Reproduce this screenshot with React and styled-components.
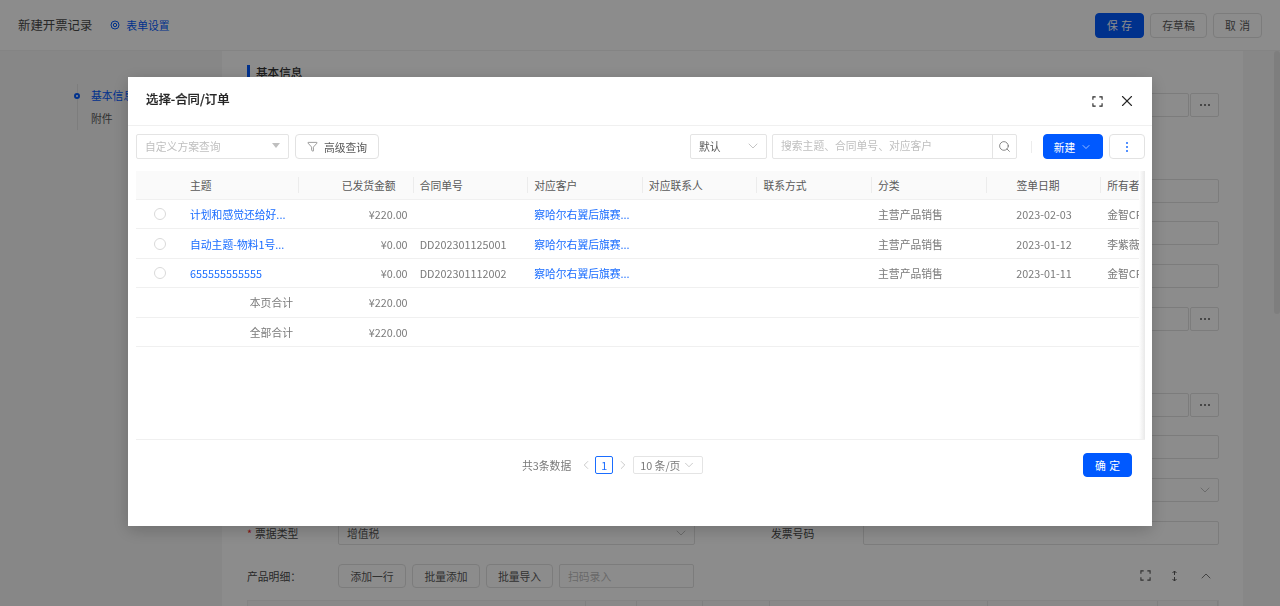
import React from "react";
import styled, { createGlobalStyle } from "styled-components";
import { ChevronDown, ChevronLeft, ChevronRight, ChevronUp, Filter, Search, X } from "lucide-react";

const GlobalStyle = createGlobalStyle`
  html, body {
    margin: 0;
    padding: 0;
    height: 100%;
    overflow: hidden;
    background: #fff;
    font-family: "Noto Sans CJK SC", "Noto Sans", sans-serif;
    font-size: 10.8px;
    color: #595959;
  }
  * { box-sizing: border-box; }
`;

const Page = styled.div`
  height: 606px;
  overflow: hidden;
  display: flex;
  flex-direction: column;
  background: #fff;
`;

const TopBar = styled.header`
  height: 51px;
  flex: none;
  display: flex;
  align-items: center;
  padding: 0 18px;
  border-bottom: 1px solid #f0f0f0;
`;

const PageTitle = styled.div`
  font-size: 12.4px;
  color: #4a4a4a;
`;

const SettingLink = styled.a`
  display: flex;
  align-items: center;
  gap: 6px;
  margin-left: 18px;
  color: #0059ff;
  font-size: 10.8px;
`;

const TopActions = styled.div`
  margin-left: auto;
  display: flex;
  gap: 6px;
`;

const Button = styled.button`
  height: ${(p) => p.$h || 25}px;
  width: ${(p) => p.$w}px;
  margin-left: ${(p) => p.$ml || 0}px;
  padding: 0;
  flex: none;
  display: inline-flex;
  flex-direction: ${(p) => (p.$stack ? "column" : "row")};
  align-items: center;
  justify-content: center;
  gap: ${(p) => p.$gap || 0}px;
  border-radius: 4px;
  border: 1px solid ${(p) => (p.$primary ? "#0059ff" : "#e2e2e2")};
  background: ${(p) => (p.$primary ? "#0059ff" : "#fff")};
  color: ${(p) => (p.$primary ? "#fff" : "#595959")};
  font-family: inherit;
  font-size: 10.8px;
  word-spacing: 1px;
`;

const Body = styled.div`
  flex: 1;
  min-height: 0;
  display: flex;
  background: #f6f6f6;
`;

const Sidebar = styled.aside`
  width: 222px;
  flex: none;
  padding: 33px 0 0 77px;
`;

const NavRail = styled.nav`
  border-left: 1px solid #e4e4e4;
  padding-left: 13px;
  height: 46px;
`;

const NavItem = styled.div`
  position: relative;
  height: 23px;
  line-height: 23px;
  color: ${(p) => (p.$active ? "#0059ff" : "#595959")};
  ${(p) =>
    p.$active &&
    `&::before {
      content: "";
      box-sizing: border-box;
      position: absolute;
      left: -17px;
      top: 9px;
      width: 6px;
      height: 6px;
      border-radius: 50%;
      border: 2px solid #0059ff;
      background: #fff;
    }`}
`;

const FormPanel = styled.main`
  width: 1021px;
  flex: none;
  background: #fff;
  padding: 14px 24px 0 25px;
`;

const SectionTitle = styled.h2`
  margin: 0 0 14px;
  height: 14px;
  line-height: 14px;
  padding-left: 6px;
  border-left: 3px solid #0059ff;
  font-size: 11.6px;
  font-weight: 500;
  color: #333;
`;

const FormGrid = styled.div`
  display: grid;
  grid-template-columns: 448px 448px;
  column-gap: 76px;
  row-gap: 18.8px;
`;

const Field = styled.div`
  display: grid;
  grid-template-columns: ${(p) => p.$labelW || 91}px 1fr;
  height: 24px;
  align-items: center;
`;

const FieldLabel = styled.label`
  color: #4a4a4a;
  white-space: nowrap;
`;

const Required = styled.span`
  color: #f5222d;
  margin-right: 3px;
`;

const Control = styled.div`
  grid-column: 2;
  height: 24px;
  display: flex;
  align-items: center;
  justify-content: space-between;
  padding: 0 5px 0 8px;
  border: 1px solid #e2e2e2;
  border-radius: 2px;
  background: #fff;
  color: #595959;
`;

const AddonRow = styled.div`
  grid-column: 2;
  display: flex;
  gap: 1px;
`;

const AddonInput = styled.div`
  flex: 1;
  height: 24px;
  border: 1px solid #e2e2e2;
  border-radius: 2px;
`;

const AddonButton = styled.div`
  width: 29px;
  height: 24px;
  display: flex;
  align-items: center;
  justify-content: center;
  gap: 2px;
  border: 1px solid #e2e2e2;
  border-radius: 2px;
`;

const Dot = styled.i`
  width: 2px;
  height: 2px;
  border-radius: 50%;
  background: ${(p) => p.$color || "#595959"};
`;

const DetailBar = styled.div`
  margin-top: 19px;
  height: 24px;
  display: flex;
  align-items: center;
`;

const DetailLabel = styled.div`
  width: 91px;
  color: #4a4a4a;
`;

const DetailButtons = styled.div`
  display: flex;
  gap: 6px;
`;

const ScanInput = styled.div`
  width: 135px;
  height: 24px;
  margin-left: 6px;
  padding: 0 8px;
  line-height: 22px;
  border: 1px solid #e2e2e2;
  border-radius: 2px;
  color: #bfbfbf;
`;

const DetailIcons = styled.div`
  margin-left: auto;
  margin-right: 5px;
  display: flex;
  align-items: center;
  gap: 19px;
  color: #595959;
`;

const DetailHead = styled.div`
  margin-top: 12px;
  height: 20px;
  display: grid;
  grid-template-columns: 338px 51px 66px 67px 218px 170px 1fr;
  background: #fafafa;
  border: 1px solid #f0f0f0;
  & > span { border-right: 1px solid #eaeaea; }
`;

const PageScroll = styled.div`
  flex: 1;
  background: #f6f6f6;
  display: flex;
  justify-content: flex-end;
`;

const ScrollThumb = styled.div`
  width: 6px;
  height: 263px;
  background: #e6e6e6;
  border-radius: 3px;
`;

const Mask = styled.div`
  position: fixed;
  inset: 0;
  background: rgba(0, 0, 0, 0.45);
  display: flex;
  justify-content: center;
  align-items: flex-start;
  padding-top: 77px;
`;

const Modal = styled.section`
  width: 1024px;
  height: 449px;
  display: flex;
  flex-direction: column;
  background: #fff;
  box-shadow: 0 4px 16px rgba(0, 0, 0, 0.2);
`;

const ModalHeader = styled.div`
  height: 49px;
  flex: none;
  display: flex;
  align-items: center;
  padding: 0 16px 0 18px;
  border-bottom: 1px solid #f0f0f0;
`;

const ModalTitle = styled.h3`
  margin: -5px 0 0;
  font-size: 12.4px;
  font-weight: 500;
  color: #262626;
  -webkit-text-stroke: 0.2px #262626;
`;

const ModalTools = styled.div`
  margin-left: auto;
  display: flex;
  align-items: center;
  gap: 15px;
  color: #262626;
`;

const Toolbar = styled.div`
  flex: none;
  display: flex;
  justify-content: space-between;
  padding: 8px 7px 0 8px;
  height: 45px;
`;

const ToolGroup = styled.div`
  display: flex;
  align-items: flex-start;
`;

const SelectBox = styled.div`
  width: ${(p) => p.$w}px;
  height: 25px;
  display: flex;
  align-items: center;
  justify-content: space-between;
  padding: 0 ${(p) => p.$pr || 8}px 2px 8px;
  border: 1px solid #e4e4e4;
  border-radius: 2px;
  color: ${(p) => (p.$muted ? "#bfbfbf" : "#595959")};
`;

const SearchBox = styled.div`
  width: 245px;
  height: 25px;
  margin-left: 5px;
  display: flex;
  border: 1px solid #e4e4e4;
  border-radius: 2px;
`;

const SearchText = styled.div`
  flex: 1;
  line-height: 21px;
  padding-left: 8px;
  color: #bfbfbf;
  border-right: 1px solid #e4e4e4;
`;

const SearchIcon = styled.div`
  width: 23px;
  display: flex;
  align-items: center;
  justify-content: center;
  color: #595959;
`;

const ToolDivider = styled.div`
  width: 1px;
  height: 12px;
  margin: 7px 11px 0 14px;
  background: #ececec;
`;

const TableWrap = styled.div`
  position: relative;
  height: 269px;
  margin: 0 7px 0 8px;
  flex: none;
  overflow: hidden;
  border-bottom: 1px solid #f0f0f0;
`;

const ScrollEdge = styled.div`
  position: absolute;
  top: 0;
  right: 0;
  bottom: 0;
  width: 6px;
  background: linear-gradient(to right, #fff, #e9e9e9);
`;

const Table = styled.table`
  width: 1079px;
  table-layout: fixed;
  border-collapse: separate;
  border-spacing: 0;

  th {
    position: relative;
    height: 29px;
    padding: 0 17px 0 7px;
    background: #fafafa;
    border-bottom: 1px solid #f0f0f0;
    font-weight: 400;
    color: #595959;
    text-align: left;
    white-space: nowrap;
  }

  th + th:not(.first-col)::before {
    content: "";
    position: absolute;
    left: 0;
    top: 6px;
    bottom: 6px;
    width: 1px;
    background: #ececec;
  }

  th.first-col {
    padding-left: 8px;
  }

  td {
    height: 29.4px;
    padding: 0 5px 0 7px;
    border-bottom: 1px solid #f0f0f0;
    color: #7a7a7a;
    white-space: nowrap;
    overflow: hidden;
  }

  td.first-col {
    padding-left: 8px;
  }

  .right { text-align: right; }
  .center { text-align: center; }
`;

const Radio = styled.span`
  display: block;
  width: 12px;
  height: 12px;
  margin: 0 auto;
  border: 1px solid #d9d9d9;
  border-radius: 50%;
`;

const CellLink = styled.a`
  color: #1a6dff;
`;

const ModalFooter = styled.div`
  flex: none;
  display: flex;
  justify-content: space-between;
  padding: 13px 20px 0 394px;
`;

const Pager = styled.div`
  display: flex;
  align-items: center;
  height: 24px;
  color: #7a7a7a;
`;

const PagerArrow = styled.span`
  width: ${(p) => p.$w}px;
  padding-left: ${(p) => p.$pl || 0}px;
  display: flex;
  justify-content: center;
  color: #a6a6a6;
`;

const PagerCurrent = styled.span`
  width: 18px;
  height: 18px;
  line-height: 16px;
  text-align: center;
  border: 1px solid #1a6dff;
  border-radius: 2px;
  color: #1a6dff;
`;

const PageSize = styled.div`
  width: 70px;
  height: 18px;
  display: flex;
  align-items: center;
  justify-content: space-between;
  padding: 0 6px;
  border: 1px solid #e4e4e4;
  border-radius: 2px;
`;

const Caret = styled.span`
  width: 0;
  height: 0;
  border-left: 4px solid transparent;
  border-right: 4px solid transparent;
  border-top: 5px solid #bfbfbf;
`;

const CornerIcon = ({ size = 11 }) => (
  <svg width={size} height={size} viewBox="0 0 12 12" fill="none" stroke="currentColor" strokeWidth="1.2">
    <path d="M1 4V1h3M8 1h3v3M11 8v3H8M4 11H1V8" />
  </svg>
);

const HeightIcon = () => (
  <svg width="9" height="12" viewBox="0 0 9 12" fill="none" stroke="currentColor" strokeWidth="1">
    <path d="M4.5 1v4M4.5 7v4M2.5 3l2-2 2 2M2.5 9l2 2 2-2" />
  </svg>
);

const SettingIcon = () => (
  <svg width="10" height="10" viewBox="0 0 10 10" fill="none" stroke="currentColor">
    <circle cx="5" cy="5" r="4" strokeWidth="1" />
    <circle cx="5" cy="5" r="1.7" strokeWidth="1" />
  </svg>
);

const columns = [
  { label: "", width: 46 },
  { label: "主题", width: 116, first: true },
  { label: "已发货金额", width: 114.6, align: "right" },
  { label: "合同单号", width: 114.6 },
  { label: "对应客户", width: 114.6 },
  { label: "对应联系人", width: 114.6 },
  { label: "联系方式", width: 114.6 },
  { label: "分类", width: 114.6 },
  { label: "签单日期", width: 114.6, align: "center" },
  { label: "所有者", width: 114.6 },
];

const customer = "察哈尔右翼后旗赛...";

const rows = [
  { subject: "计划和感觉还给好...", amount: "¥220.00", no: "", date: "2023-02-03", owner: "金智CRM" },
  { subject: "自动主题-物料1号...", amount: "¥0.00", no: "DD202301125001", date: "2023-01-12", owner: "李紫薇" },
  { subject: "655555555555", amount: "¥0.00", no: "DD202301112002", date: "2023-01-11", owner: "金智CRM" },
];

const totals = [
  { label: "本页合计", amount: "¥220.00" },
  { label: "全部合计", amount: "¥220.00" },
];

// 右列字段类型，null 表示该行没有可见控件
const formRows = ["addon", null, "input", "input", "input", "addon", null, "addon", "input", "select"];

const FormField = ({ type }) => {
  if (!type) return <Field />;
  if (type === "addon") {
    return (
      <Field>
        <AddonRow>
          <AddonInput />
          <AddonButton>
            <Dot />
            <Dot />
            <Dot />
          </AddonButton>
        </AddonRow>
      </Field>
    );
  }
  return (
    <Field>
      <Control>{type === "select" && <span />}{type === "select" && <ChevronDown size={16} strokeWidth={1} color="#a6a6a6" />}</Control>
    </Field>
  );
};

const App = () => {
  return (
    <Page>
      <GlobalStyle />
      <TopBar>
        <PageTitle>新建开票记录</PageTitle>
        <SettingLink>
          <SettingIcon />
          表单设置
        </SettingLink>
        <TopActions>
          <Button $primary $w={49}>保 存</Button>
          <Button $w={57}>存草稿</Button>
          <Button $w={49}>取 消</Button>
        </TopActions>
      </TopBar>

      <Body>
        <Sidebar>
          <NavRail>
            <NavItem $active>基本信息</NavItem>
            <NavItem>附件</NavItem>
          </NavRail>
        </Sidebar>

        <FormPanel>
          <SectionTitle>基本信息</SectionTitle>
          <FormGrid>
            {formRows.map((type, i) => (
              <React.Fragment key={i}>
                <Field />
                <FormField type={type} />
              </React.Fragment>
            ))}
            <Field>
              <FieldLabel>
                <Required>*</Required>票据类型
              </FieldLabel>
              <Control>
                增值税
                <ChevronDown size={16} strokeWidth={1} color="#a6a6a6" />
              </Control>
            </Field>
            <Field $labelW={92}>
              <FieldLabel>发票号码</FieldLabel>
              <Control />
            </Field>
          </FormGrid>

          <DetailBar>
            <DetailLabel>产品明细：</DetailLabel>
            <DetailButtons>
              <Button $w={68} $h={24}>添加一行</Button>
              <Button $w={68} $h={24}>批量添加</Button>
              <Button $w={67} $h={24}>批量导入</Button>
            </DetailButtons>
            <ScanInput>扫码录入</ScanInput>
            <DetailIcons>
              <CornerIcon size={11} />
              <HeightIcon />
              <ChevronUp size={16} strokeWidth={1.2} />
            </DetailIcons>
          </DetailBar>
          <DetailHead>
            <span />
            <span />
            <span />
            <span />
            <span />
            <span />
            <span />
          </DetailHead>
        </FormPanel>

        <PageScroll>
          <ScrollThumb />
        </PageScroll>
      </Body>

      <Mask>
        <Modal>
          <ModalHeader>
            <ModalTitle>选择-合同/订单</ModalTitle>
            <ModalTools>
              <CornerIcon size={11} />
              <X size={18} strokeWidth={1.5} />
            </ModalTools>
          </ModalHeader>

          <Toolbar>
            <ToolGroup>
              <SelectBox $w={153} $muted>
                自定义方案查询
                <Caret />
              </SelectBox>
              <Button $w={84} $gap={6} $ml={6}>
                <Filter size={11} strokeWidth={1.3} />
                高级查询
              </Button>
            </ToolGroup>
            <ToolGroup>
              <SelectBox $w={77} $pr={5}>
                默认
                <ChevronDown size={16} strokeWidth={1} color="#a6a6a6" />
              </SelectBox>
              <SearchBox>
                <SearchText>搜索主题、合同单号、对应客户</SearchText>
                <SearchIcon>
                  <Search size={13} strokeWidth={1.3} />
                </SearchIcon>
              </SearchBox>
              <ToolDivider />
              <Button $primary $w={60} $gap={5}>
                新建
                <ChevronDown size={12} strokeWidth={1.2} />
              </Button>
              <Button $w={36} $gap={2} $ml={6} $stack>
                <Dot $color="#1a6dff" />
                <Dot $color="#1a6dff" />
                <Dot $color="#1a6dff" />
              </Button>
            </ToolGroup>
          </Toolbar>

          <TableWrap>
            <Table>
              <colgroup>
                {columns.map((col, i) => (
                  <col key={i} style={{ width: col.width }} />
                ))}
              </colgroup>
              <thead>
                <tr>
                  {columns.map((col, i) => (
                    <th key={i} className={col.first ? "first-col" : col.align}>
                      {col.label}
                    </th>
                  ))}
                </tr>
              </thead>
              <tbody>
                {rows.map((row) => (
                  <tr key={row.date}>
                    <td><Radio /></td>
                    <td className="first-col"><CellLink>{row.subject}</CellLink></td>
                    <td className="right">{row.amount}</td>
                    <td>{row.no}</td>
                    <td><CellLink>{customer}</CellLink></td>
                    <td />
                    <td />
                    <td>主营产品销售</td>
                    <td className="center">{row.date}</td>
                    <td>{row.owner}</td>
                  </tr>
                ))}
                {totals.map((total) => (
                  <tr key={total.label}>
                    <td />
                    <td className="right">{total.label}</td>
                    <td className="right">{total.amount}</td>
                    <td />
                    <td />
                    <td />
                    <td />
                    <td />
                    <td />
                    <td />
                  </tr>
                ))}
              </tbody>
            </Table>
            <ScrollEdge />
          </TableWrap>

          <ModalFooter>
            <Pager>
              共3条数据
              <PagerArrow $w={24} $pl={6}><ChevronLeft size={14} strokeWidth={1} /></PagerArrow>
              <PagerCurrent>1</PagerCurrent>
              <PagerArrow $w={20}><ChevronRight size={14} strokeWidth={1} /></PagerArrow>
              <PageSize>
                10 条/页
                <ChevronDown size={14} strokeWidth={1} color="#a6a6a6" />
              </PageSize>
            </Pager>
            <Button $primary $w={49} $h={24}>确 定</Button>
          </ModalFooter>
        </Modal>
      </Mask>
    </Page>
  );
};

export default App;
